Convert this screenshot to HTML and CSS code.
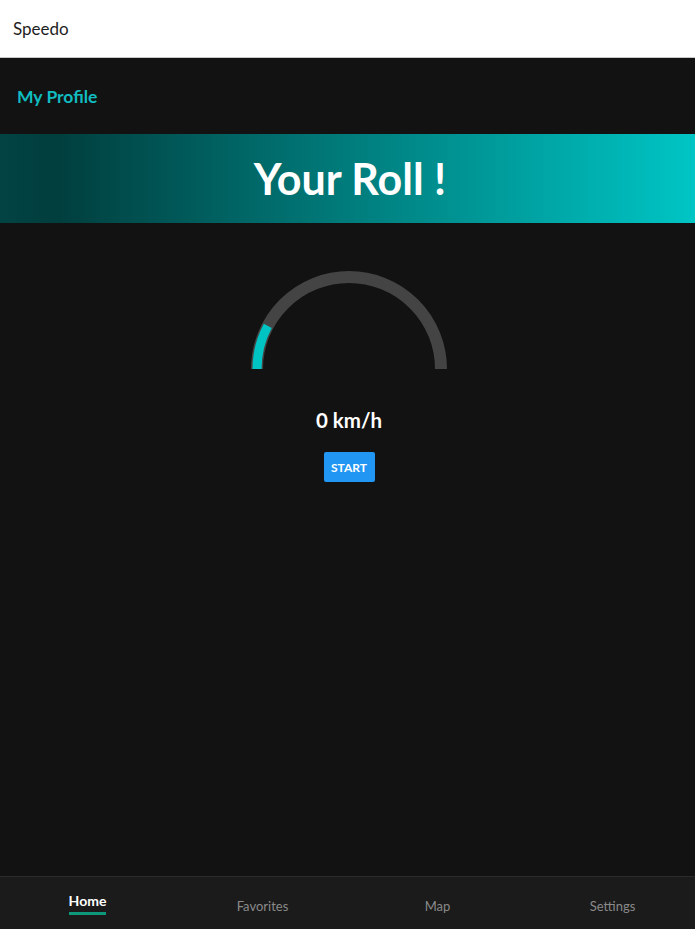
FILE: index.html
```html
<!DOCTYPE html>
<html>
<head>
<meta charset="utf-8">
<link rel="stylesheet" href="styles.css">
</head>
<body>
<div class="app">
  <header class="topbar">Speedo</header>
  <main class="content">
    <div class="profile">My Profile</div>
    <div class="banner"><h1>Your Roll !</h1></div>
    <section class="gauge-area">
      <svg class="gauge" width="200" height="102" viewBox="0 0 200 102">
        <path d="M 8 100 A 92 92 0 0 1 192 100" fill="none" stroke="#444" stroke-width="12"/>
        <path d="M 8 100 A 92 92 0 0 1 18.8 56.8" fill="none" stroke="#00c4c4" stroke-width="9"/>
      </svg>
      <div class="speed">0 km/h</div>
      <button class="start">START</button>
    </section>
  </main>
  <nav class="tabs">
    <div class="tab active"><span>Home</span></div>
    <div class="tab"><span>Favorites</span></div>
    <div class="tab"><span>Map</span></div>
    <div class="tab"><span>Settings</span></div>
  </nav>
</div>
</body>
</html>
```
FILE: styles.css
```css
* { box-sizing: border-box; }
html, body { margin: 0; padding: 0; height: 100%; overflow: hidden; }
body {
  background: #121212;
  font-family: "Lato", "Open Sans", sans-serif;
}
.app {
  width: 700px;
  height: 929px;
  display: flex;
  flex-direction: column;
}
.topbar {
  height: 58px;
  background: #fff;
  border-bottom: 1px solid #c8c8c8;
  color: #1e1e1e;
  font-size: 17px;
  padding-left: 13px;
  display: flex;
  align-items: center;
}
.content {
  flex: 1;
  background: #121212;
  display: flex;
  flex-direction: column;
}
.profile {
  height: 76px;
  padding-left: 17px;
  display: flex;
  align-items: center;
  color: #10bcc0;
  font-weight: 700;
  font-size: 17.5px;
}
.banner {
  height: 89px;
  background: linear-gradient(to right, #024343 0%, #013e3e 8%, #00c6c6 100%);
  display: flex;
  align-items: center;
  justify-content: center;
}
.banner h1 {
  margin: 0;
  color: #fff;
  font-size: 43px;
  font-weight: 700;
}
.gauge-area {
  display: flex;
  flex-direction: column;
  align-items: center;
  padding-top: 46px;
  padding-right: 2px;
}
.gauge { display: block; margin-left: -1px; }
.speed {
  margin-top: 37px;
  color: #fff;
  font-weight: 700;
  font-size: 20.5px;
}
.start {
  margin-top: 20px;
  width: 51px;
  height: 30px;
  border: none;
  border-radius: 2px;
  background: #2196f3;
  color: #fff;
  font-family: inherit;
  font-weight: 700;
  font-size: 12px;
  padding: 0;
}
.tabs {
  height: 53px;
  background: #1b1b1b;
  border-top: 1px solid #2a2a2a;
  display: grid;
  grid-template-columns: repeat(4, 1fr);
}
.tab {
  display: flex;
  justify-content: center;
  align-items: center;
  padding-top: 6px;
  color: #8a8a8a;
  font-size: 13px;
}
.tab.active {
  padding-top: 0;
  color: #fff;
  font-weight: 700;
  font-size: 14px;
}
.tab.active span {
  border-bottom: 3px solid #0e9a7a;
  padding-bottom: 3px;
}
```
